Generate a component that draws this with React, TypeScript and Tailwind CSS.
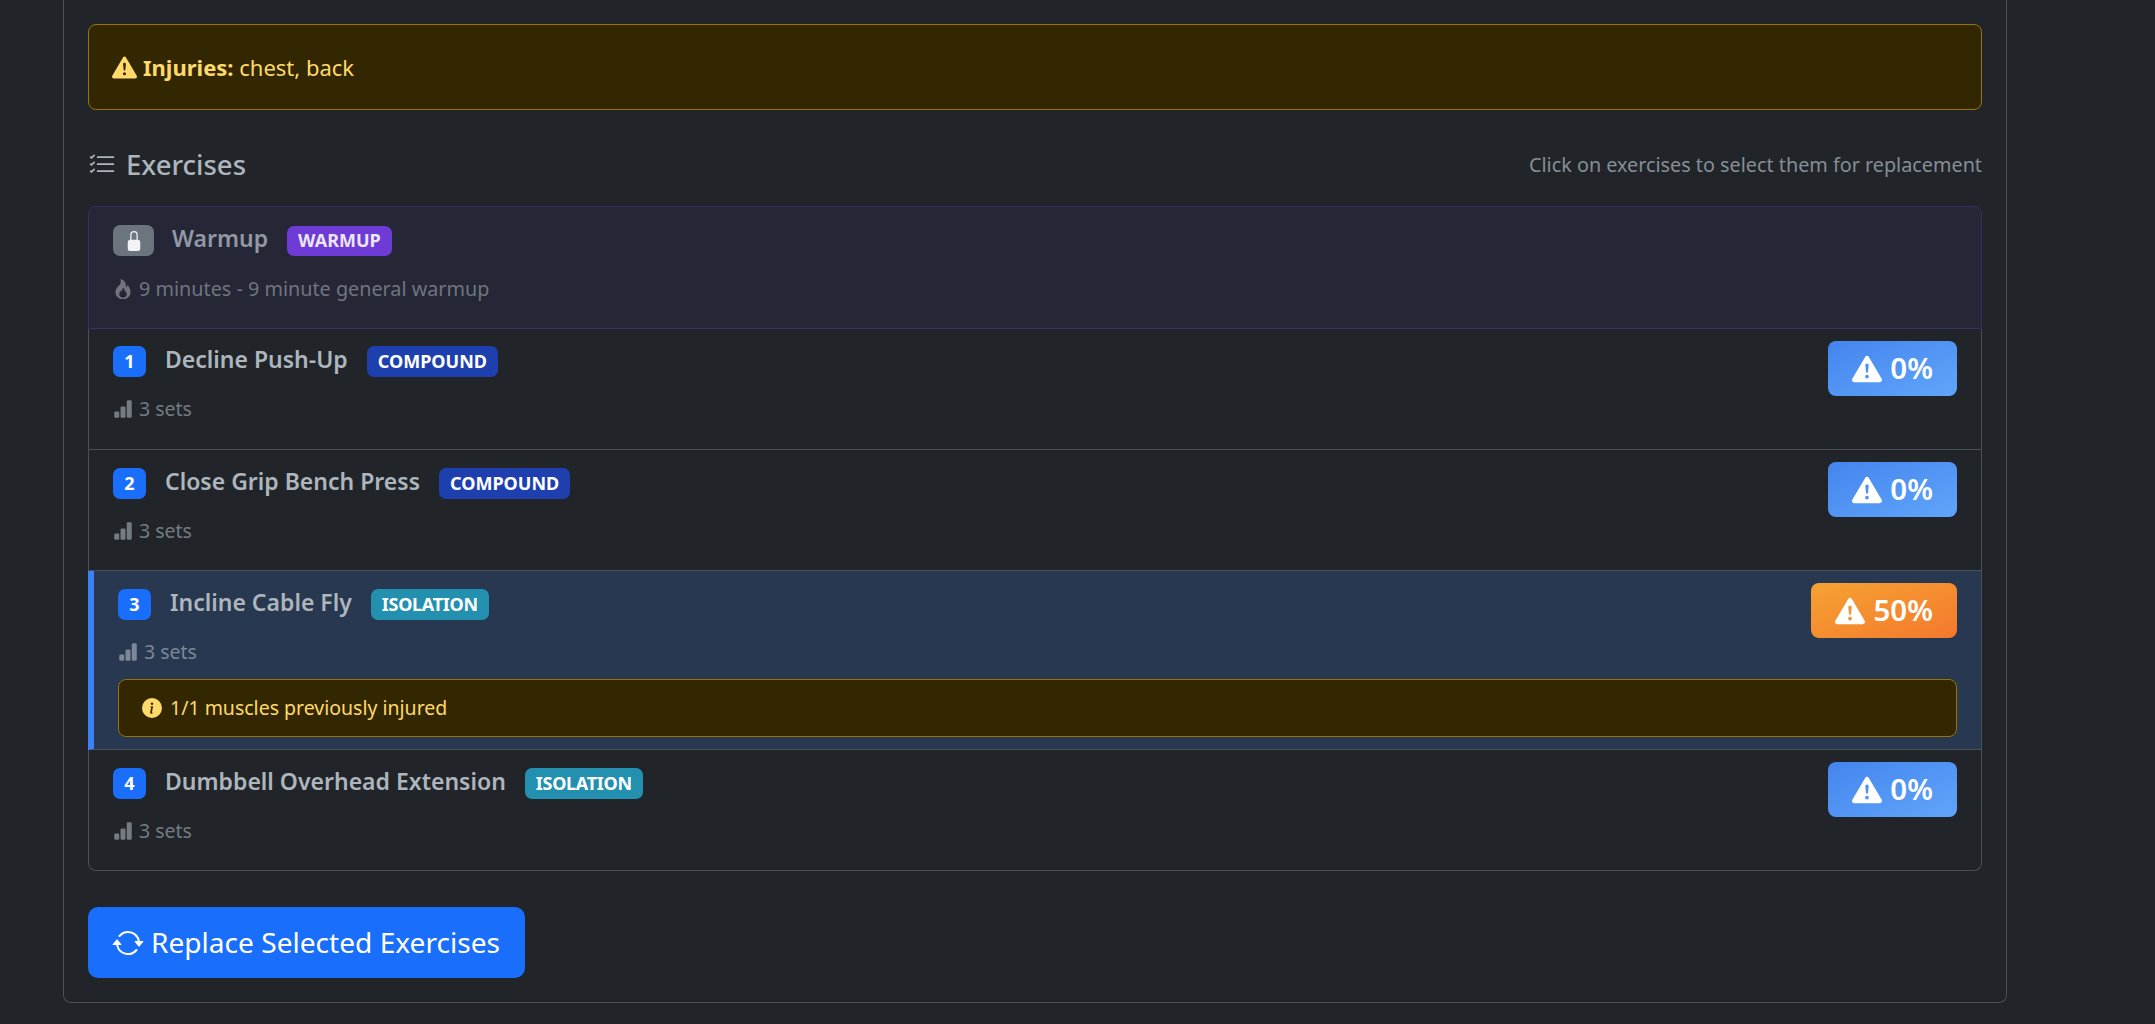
import { BsArrowRepeat, BsBarChartFill, BsExclamationTriangleFill, BsFire, BsInfoCircleFill, BsListCheck, BsLockFill } from "react-icons/bs";

const font = { fontFamily: '"Noto Sans", "Open Sans", sans-serif' };

function Risk({ value, high, first }: { value: string; high?: boolean; first?: boolean }) {
  return (
    <div
      className={`flex h-[55px] items-center gap-[8px] rounded-[8px] px-[24px] text-[29.5px] font-semibold text-white bg-linear-to-br ${first ? "-mt-[5px]" : "-mt-[6px]"} ${
        high ? "from-[#f5a232] to-[#f4782d]" : "from-[#4485ee] to-[#60a5fa]"
      }`}
    >
      <BsExclamationTriangleFill className="h-[30px] w-[30px]" />
      <span>{value}</span>
    </div>
  );
}

function Row({
  num,
  name,
  type,
  risk,
  selected,
  last,
}: {
  num: number;
  name: string;
  type: "COMPOUND" | "ISOLATION";
  risk: string;
  selected?: boolean;
  last?: boolean;
}) {
  const first = num === 1;
  return (
    <div
      className={`border-b border-r border-[#495057] pr-[24px] ${first ? "pt-[17px]" : "pt-[18px]"} ${selected ? "border-l-[6px] border-l-[#3b82f6] bg-[#273850] pl-[24px] pb-[12px]" : first ? "border-l pl-[24px] pb-[27px]" : "border-l pl-[24px] pb-[26px]"} ${last ? "rounded-b-[8px]" : ""}`}
    >
      <div className="flex items-start justify-between">
        <div>
          <div className="flex h-[31px] items-center">
            <span className="flex h-[31px] w-[33px] items-center justify-center rounded-[7px] bg-[#1a6efc] text-[18px] font-bold text-white">{num}</span>
            <span className="ml-[19px] text-[23px] font-semibold text-[#adb5bd] -mt-[4px]">{name}</span>
            <span className={`ml-[19px] flex h-[31px] items-center rounded-[7px] px-[11px] text-[18px] font-bold text-white ${type === "COMPOUND" ? "bg-[#1e40af]" : "bg-[#2490b0]"}`}>{type === "ISOLATION" ? <span className="tracking-[-0.3px]">{type}</span> : type}</span>
          </div>
          <div className={`mt-[18px] flex h-[27px] items-center gap-[6px] text-[19.5px] ${selected ? "text-[#7c8797]" : "text-[#747b83]"}`}>
            <BsBarChartFill className="h-[20px] w-[20px]" />
            <span>3 sets</span>
          </div>
        </div>
        <Risk value={risk} high={selected} first={first} />
      </div>
      {selected && (
        <div className="mt-[14px] flex h-[58px] items-center gap-[8px] rounded-[8px] border border-[#997404] bg-[#332701] px-[23px] text-[19.5px] text-[#ffda6a]">
          <BsInfoCircleFill className="h-[20px] w-[20px]" />
          <span>1/1 muscles previously injured</span>
        </div>
      )}
    </div>
  );
}

export default function App() {
  return (
    <div className="h-[1024px] overflow-hidden bg-[#212529] pl-[63px]" style={font}>
      <div className="w-[1944px] rounded-b-[8px] border-x border-b border-[#495057] px-[24px] pt-[24px] pb-[24px]">
        {/* injuries */}
        <div className="flex h-[86px] items-center gap-[6px] rounded-[8px] border border-[#997404] bg-[#332701] px-[23px] text-[22px] text-[#ffda6a]">
          <BsExclamationTriangleFill className="h-[25px] w-[25px]" />
          <span><b className="font-bold">Injuries:</b> chest, back</span>
        </div>

        <div className="mt-[35px] flex h-[40px] items-center justify-between">
          <div className="flex items-center gap-[10px] text-[#adb5bd]">
            <BsListCheck className="h-[28px] w-[28px]" />
            <span className="text-[27.5px] font-medium">Exercises</span>
          </div>
          <span className="text-[19.8px] text-[#868e96]">Click on exercises to select them for replacement</span>
        </div>

        {/* list */}
        <div className="mt-[21px]">
          <div className="rounded-t-[8px] border border-[#382e66] bg-[#252736] pt-[18px] pl-[24px] pb-[26px]">
            <div className="flex h-[31px] items-center">
              <span className="flex h-[31px] w-[41px] items-center justify-center rounded-[7px] bg-[#6c757d] text-[#f1f3f5]">
                <BsLockFill className="h-[20px] w-[20px]" />
              </span>
              <span className="ml-[18px] text-[23px] font-semibold text-[#9298a4] -mt-[4px]">Warmup</span>
              <span className="ml-[19px] flex h-[30px] items-center rounded-[7px] bg-[#6f3bd6] px-[11px] text-[18px] font-bold text-[#ebe6f8]">WARMUP</span>
            </div>
            <div className="mt-[19px] flex h-[27px] items-center gap-[6px] text-[19.8px] text-[#707580]">
              <BsFire className="h-[20px] w-[20px]" />
              <span>9 minutes - 9 minute general warmup</span>
            </div>
          </div>
          <Row num={1} name="Decline Push-Up" type="COMPOUND" risk="0%" />
          <Row num={2} name="Close Grip Bench Press" type="COMPOUND" risk="0%" />
          <Row num={3} name="Incline Cable Fly" type="ISOLATION" risk="50%" selected />
          <Row num={4} name="Dumbbell Overhead Extension" type="ISOLATION" risk="0%" last />
        </div>

        <button className="mt-[36px] flex h-[71px] items-center gap-[7px] rounded-[10px] bg-[#1a6efc] pl-[24px] pr-[25px] text-[28.1px] text-white">
          <BsArrowRepeat className="h-[32px] w-[32px]" />
          Replace Selected Exercises
        </button>
      </div>
    </div>
  );
}
